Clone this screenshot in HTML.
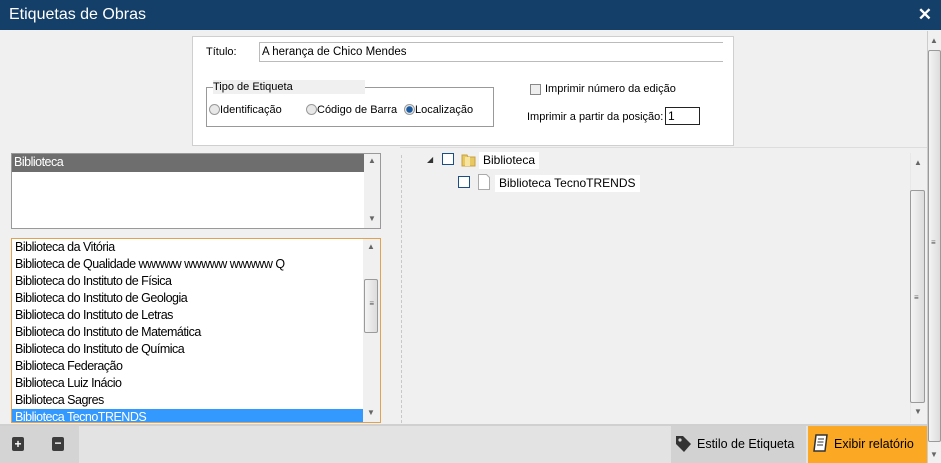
<!DOCTYPE html>
<html><head><meta charset="utf-8"><style>
*{box-sizing:border-box;margin:0;padding:0}
body{width:941px;height:463px;overflow:hidden;background:#f0f0f0;font-family:"Liberation Sans",sans-serif;font-size:12px;color:#000;position:relative}
.abs{position:absolute}
.title{left:0;top:0;width:941px;height:30px;background:#143f68;color:#fff;font-size:16px;line-height:30px;padding-left:9px}
.close{right:9px;top:0;color:#fff;font-size:17px;font-weight:bold;line-height:30px}
.panel{left:192px;top:36px;width:542px;height:110px;background:#fff;border:1px solid #cfcfcf}
.sbt{background:#f0f0f0}
.thumb{background:linear-gradient(90deg,#f4f4f4,#dcdcdc);border:1px solid #9a9a9a;border-radius:2px}
.arr{font-size:8px;color:#666;text-align:center;width:14px}
.list .it{height:17px;line-height:17px;padding-left:3px;font-size:12.5px;letter-spacing:-0.5px}
.radio{display:inline-block;width:11px;height:11px;border-radius:50%;border:1px solid #999;background:#e8e8e8;vertical-align:-2px}
.cb{display:inline-block;width:12px;height:12px;border:1.5px solid #1a4f86;background:#fff}
</style></head><body>
<div class="abs title">Etiquetas de Obras</div>
<div class="abs close">✕</div>

<div class="abs panel">
  <div class="abs" style="left:13px;top:9px;font-size:11px">Título:</div>
  <div class="abs" style="left:66px;top:5px;width:464px;height:20px;border:1px solid #bbb;border-right:none;font-size:11.5px;line-height:18px;padding-left:2px">A herança de Chico Mendes</div>
  <div class="abs" style="left:13px;top:50px;width:288px;height:40px;border:1px solid #999;border-top:none"></div>
  <div class="abs" style="left:13px;top:50px;width:288px;height:1px;background:#999"></div>
  <div class="abs" style="left:20px;top:43px;width:152px;height:14px;background:#f0f0f0;font-size:11px;line-height:14px">Tipo de Etiqueta</div>
  <div class="abs" style="left:16px;top:67px;font-size:11px"><span class="radio"></span>Identificação</div>
  <div class="abs" style="left:113px;top:67px;font-size:11px"><span class="radio"></span>Código de Barra</div>
  <div class="abs" style="left:211px;top:67px;font-size:11px"><span class="radio" style="background:radial-gradient(circle,#1a5aa0 0 3px,#e8e8e8 3.5px)"></span>Localização</div>
  <div class="abs" style="left:337px;top:47px;width:11px;height:11px;border:1px solid #888;background:#eee"></div>
  <div class="abs" style="left:352px;top:46px;font-size:11px">Imprimir número da edição</div>
  <div class="abs" style="left:334px;top:74px;font-size:11px">Imprimir a partir da posição:</div>
  <div class="abs" style="left:472px;top:70px;width:35px;height:18px;border:1px solid #222;font-size:12px;line-height:16px;padding-left:2px">1</div>
</div>

<div class="abs" style="left:11px;top:153px;width:370px;height:76px;background:#fff;border:1px solid #999">
  <div class="abs" style="left:0;top:0;width:352px;height:18px;background:#6e6e6e;color:#fff;font-size:12.5px;letter-spacing:-0.5px;line-height:17px;padding-left:2px">Biblioteca</div>
  <div class="abs sbt" style="right:0;top:0;width:16px;height:74px"></div>
  <div class="abs arr" style="right:1px;top:2px">▲</div>
  <div class="abs arr" style="right:1px;top:60px">▼</div>
</div>

<div class="abs list" style="left:11px;top:238px;width:370px;height:185px;background:#fff;border:1px solid #e0a24e;overflow:hidden">
  <div class="it">Biblioteca da Vitória</div>
  <div class="it">Biblioteca de Qualidade wwwww wwwww wwwww Q</div>
  <div class="it">Biblioteca do Instituto de Física</div>
  <div class="it">Biblioteca do Instituto de Geologia</div>
  <div class="it">Biblioteca do Instituto de Letras</div>
  <div class="it">Biblioteca do Instituto de Matemática</div>
  <div class="it">Biblioteca do Instituto de Química</div>
  <div class="it">Biblioteca Federação</div>
  <div class="it">Biblioteca Luiz Inácio</div>
  <div class="it">Biblioteca Sagres</div>
  <div class="it" style="background:#3399ff;color:#fff;width:351px">Biblioteca TecnoTRENDS</div>
  <div class="abs sbt" style="right:0;top:0;width:17px;height:183px"></div>
  <div class="abs arr" style="right:2px;top:3px">▲</div>
  <div class="abs thumb" style="right:2px;top:40px;width:14px;height:54px"></div>
  <div class="abs" style="right:6px;top:60px;font-size:8px;color:#555">≡</div>
  <div class="abs arr" style="right:2px;top:169px">▼</div>
</div>

<div class="abs" style="left:401px;top:155px;height:268px;border-left:1px dashed #c8c8c8"></div>
<div class="abs" style="left:400px;top:147px;width:527px;height:1px;background:#ddd"></div>

<div class="abs" style="left:427px;top:155px;font-size:8px;color:#333">◢</div>
<div class="abs cb" style="left:442px;top:153px"></div>
<svg class="abs" style="left:461px;top:152px" width="15" height="15"><path d="M1 3h5l1 2h7v9H1z" fill="#e8c860" stroke="#c9a040"/><path d="M4 5h5v9H4z" fill="#f6e4a0"/></svg>
<div class="abs" style="left:479px;top:152px;background:#fff;padding:0 4px;height:17px;line-height:17px;font-size:12px">Biblioteca</div>
<div class="abs cb" style="left:458px;top:176px"></div>
<svg class="abs" style="left:477px;top:174px" width="14" height="16"><path d="M1.5 .5h8l3 3v12h-11z" fill="#fff" stroke="#aaa"/></svg>
<div class="abs" style="left:495px;top:175px;background:#fff;padding:0 4px;height:17px;line-height:17px;font-size:12px">Biblioteca TecnoTRENDS</div>

<div class="abs sbt" style="left:910px;top:153px;width:16px;height:270px;border-left:1px solid #e8e8e8"></div>
<div class="abs arr" style="left:911px;top:158px">▲</div>
<div class="abs thumb" style="left:910px;top:190px;width:15px;height:213px"></div>
<div class="abs" style="left:914px;top:293px;font-size:8px;color:#555">≡</div>
<div class="abs arr" style="left:911px;top:407px">▼</div>

<div class="abs" style="left:927px;top:31px;width:14px;height:432px;background:#f0f0f0;border-left:1px solid #ccc"></div>
<div class="abs arr" style="left:927px;top:36px">▲</div>
<div class="abs thumb" style="left:928px;top:50px;width:13px;height:392px"></div>
<div class="abs" style="left:931px;top:238px;font-size:8px;color:#555">≡</div>
<div class="abs arr" style="left:927px;top:450px">▼</div>

<div class="abs" style="left:0;top:424px;width:927px;height:39px;background:#e3e3e3;border-top:2px solid #d0d0d0"></div>
<div class="abs" style="left:0;top:426px;width:44px;height:37px;background:#d4d4d4"></div>
<div class="abs" style="left:44px;top:426px;width:35px;height:37px;background:#d4d4d4"></div>
<div class="abs" style="left:12px;top:437px;width:12px;height:14px;background:#3c3c3c;border-radius:2px;color:#fff;font-size:12px;line-height:14px;text-align:center;font-weight:bold">+</div>
<div class="abs" style="left:52px;top:437px;width:12px;height:14px;background:#3c3c3c;border-radius:2px;color:#fff;font-size:12px;line-height:13px;text-align:center;font-weight:bold">−</div>
<div class="abs" style="left:671px;top:426px;width:135px;height:37px;background:#d2d2d2"></div>
<svg class="abs" style="left:674px;top:434px" width="18" height="20"><path d="M2 2h7l8 8-7 8-8-8z" fill="#333"/><circle cx="6" cy="6" r="1.6" fill="#d2d2d2"/></svg>
<div class="abs" style="left:697px;top:437px;font-size:12.5px">Estilo de Etiqueta</div>
<div class="abs" style="left:808px;top:426px;width:119px;height:37px;background:#fba824"></div>
<svg class="abs" style="left:812px;top:433px" width="18" height="20"><path d="M4 2h11l-2 16H2z" fill="#fff" stroke="#333" stroke-width="1.5"/><path d="M6 6h6M5.5 9h6M5 12h6" stroke="#333"/></svg>
<div class="abs" style="left:834px;top:437px;font-size:12.5px">Exibir relatório</div>
</body></html>
